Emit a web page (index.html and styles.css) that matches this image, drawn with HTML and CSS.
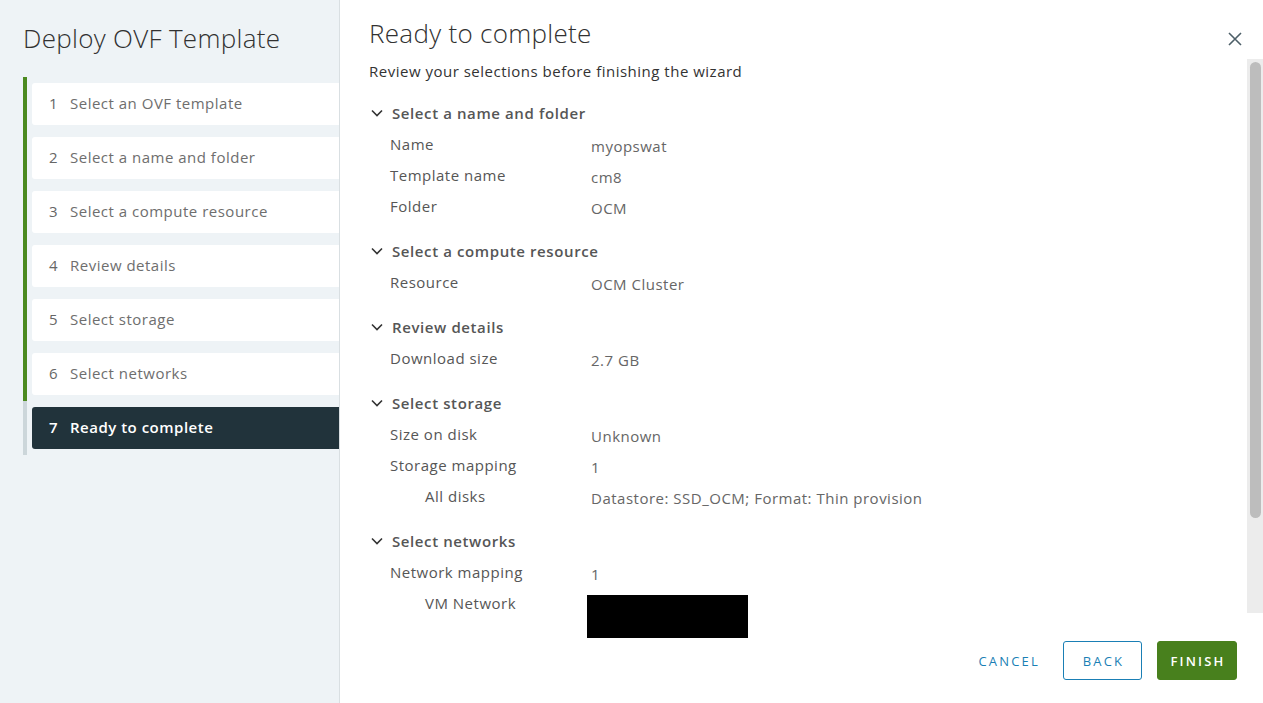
FILE: index.html
```html
<!DOCTYPE html>
<html lang="en">
<head>
<meta charset="utf-8">
<title>Deploy OVF Template</title>
<link rel="stylesheet" href="styles.css">
</head>
<body>
<div class="wizard">
  <aside class="sidebar">
    <h1 class="wizard-title">Deploy OVF Template</h1>
    <ol class="steps">
      <li class="step done"><div class="step-card"><span class="num">1</span><span class="label">Select an OVF template</span></div></li>
      <li class="step done"><div class="step-card"><span class="num">2</span><span class="label">Select a name and folder</span></div></li>
      <li class="step done"><div class="step-card"><span class="num">3</span><span class="label">Select a compute resource</span></div></li>
      <li class="step done"><div class="step-card"><span class="num">4</span><span class="label">Review details</span></div></li>
      <li class="step done"><div class="step-card"><span class="num">5</span><span class="label">Select storage</span></div></li>
      <li class="step done"><div class="step-card"><span class="num">6</span><span class="label">Select networks</span></div></li>
      <li class="step current"><div class="step-card"><span class="num">7</span><span class="label">Ready to complete</span></div></li>
    </ol>
  </aside>
  <main class="main">
    <header class="main-header">
      <h2 class="page-title">Ready to complete</h2>
      <button class="close" aria-label="Close">
        <svg width="14" height="14" viewBox="0 0 14 14"><path d="M1 1 L13 13 M13 1 L1 13" stroke="#4d5f68" stroke-width="1.6" fill="none"/></svg>
      </button>
    </header>
    <div class="scroll">
      <div class="scroll-content">
        <p class="intro">Review your selections before finishing the wizard</p>

        <section class="block">
          <div class="block-head"><svg class="chev" width="12" height="8" viewBox="0 0 12 8"><path d="M1 1.5 L6 6.5 L11 1.5" stroke="#333" stroke-width="1.6" fill="none"/></svg>Select a name and folder</div>
          <div class="row"><span class="k">Name</span><span class="v">myopswat</span></div>
          <div class="row"><span class="k">Template name</span><span class="v">cm8</span></div>
          <div class="row"><span class="k">Folder</span><span class="v">OCM</span></div>
        </section>

        <section class="block">
          <div class="block-head"><svg class="chev" width="12" height="8" viewBox="0 0 12 8"><path d="M1 1.5 L6 6.5 L11 1.5" stroke="#333" stroke-width="1.6" fill="none"/></svg>Select a compute resource</div>
          <div class="row"><span class="k">Resource</span><span class="v">OCM Cluster</span></div>
        </section>

        <section class="block">
          <div class="block-head"><svg class="chev" width="12" height="8" viewBox="0 0 12 8"><path d="M1 1.5 L6 6.5 L11 1.5" stroke="#333" stroke-width="1.6" fill="none"/></svg>Review details</div>
          <div class="row"><span class="k">Download size</span><span class="v">2.7 GB</span></div>
        </section>

        <section class="block">
          <div class="block-head"><svg class="chev" width="12" height="8" viewBox="0 0 12 8"><path d="M1 1.5 L6 6.5 L11 1.5" stroke="#333" stroke-width="1.6" fill="none"/></svg>Select storage</div>
          <div class="row"><span class="k">Size on disk</span><span class="v">Unknown</span></div>
          <div class="row"><span class="k">Storage mapping</span><span class="v">1</span></div>
          <div class="row sub"><span class="k">All disks</span><span class="v">Datastore: SSD_OCM; Format: Thin provision</span></div>
        </section>

        <section class="block">
          <div class="block-head"><svg class="chev" width="12" height="8" viewBox="0 0 12 8"><path d="M1 1.5 L6 6.5 L11 1.5" stroke="#333" stroke-width="1.6" fill="none"/></svg>Select networks</div>
          <div class="row"><span class="k">Network mapping</span><span class="v">1</span></div>
          <div class="row sub"><span class="k">VM Network</span><span class="v"></span></div>
        </section>
      </div>
      <div class="scrollbar"><div class="thumb"></div></div>
    </div>
    <div class="redaction"></div>
    <footer class="footer">
      <button class="btn btn-link">CANCEL</button>
      <button class="btn btn-outline">BACK</button>
      <button class="btn btn-success">FINISH</button>
    </footer>
  </main>
</div>
</body>
</html>
```
FILE: styles.css
```css
* { box-sizing: border-box; }
html, body { margin: 0; padding: 0; }
body {
  font-family: "Open Sans", "Liberation Sans", sans-serif;
  color: #333;
  background: #fff;
}
.wizard {
  display: flex;
  width: 1263px;
  height: 703px;
  overflow: hidden;
}
.sidebar {
  width: 340px;
  flex: none;
  background: #eef3f6;
  border-right: 1px solid #d9dfe2;
  padding-top: 21px;
}
.wizard-title {
  margin: 0 0 0 23px;
  font-size: 26px;
  font-weight: 300;
  letter-spacing: 0.3px;
  line-height: 34px;
  color: #313131;
}
.steps {
  list-style: none;
  margin: 22px 0 0 23px;
  padding: 0;
}
.step {
  border-left: 4px solid #4c8a20;
  padding: 6px 0 6px 5px;
}
.step.current { border-left-color: #ccd6da; }
.step-card {
  height: 42px;
  background: #fff;
  border-radius: 3px 0 0 3px;
  display: flex;
  align-items: center;
  padding: 0 0 2px 17px;
  font-size: 15px;
  letter-spacing: 0.5px;
  color: #6e6e6e;
}
.step-card .num {
  width: 21px;
  color: #666;
}
.step.current .step-card {
  background: #21333b;
  color: #fff;
  font-weight: 600;
}
.step.current .num { color: #fff; }

.main {
  flex: 1;
  position: relative;
  display: flex;
  flex-direction: column;
  min-width: 0;
}
.main-header {
  height: 59px;
  flex: none;
  display: flex;
  justify-content: space-between;
  align-items: flex-start;
  padding: 16px 20px 0 29px;
}
.page-title {
  margin: 0;
  font-size: 26px;
  font-weight: 300;
  letter-spacing: 0.3px;
  line-height: 34px;
  color: #313131;
}
.close {
  background: none;
  border: 0;
  padding: 0;
  margin-top: 16px;
  margin-right: 1px;
  width: 14px;
  height: 14px;
  line-height: 0;
}
.scroll {
  height: 554px;
  flex: none;
  display: flex;
}
.scroll-content {
  flex: 1;
  overflow: hidden;
  padding: 2px 0 0 29px;
}
.scrollbar {
  width: 16px;
  flex: none;
  background: #ececec;
  padding: 3px 2px 0 3px;
}
.thumb {
  height: 456px;
  background: #bdbdbd;
  border-radius: 6px;
}
.intro {
  margin: 0 0 17px;
  font-size: 15px;
  letter-spacing: 0.5px;
  line-height: 20px;
  color: #333;
}
.block + .block { margin-top: 14px; }
.block-head {
  height: 31px;
  display: flex;
  align-items: center;
  font-size: 15px;
  letter-spacing: 0.6px;
  font-weight: 600;
  color: #565656;
  padding: 0 0 1px 2px;
}
.chev { margin-right: 9px; }
.row {
  height: 31px;
  display: flex;
  align-items: center;
  font-size: 15px;
  letter-spacing: 0.5px;
  padding-left: 21px;
}
.row .k {
  width: 201px;
  color: #565656;
  font-weight: 500;
  position: relative;
  top: -1px;
}
.row .v {
  color: #666;
  position: relative;
  top: 1px;
}
.row.sub .k { padding-left: 35px; }
.redaction {
  position: absolute;
  left: 247px;
  top: 595px;
  width: 161px;
  height: 43px;
  background: #000;
}
.footer {
  flex: 1;
  display: flex;
  justify-content: flex-end;
  align-items: flex-start;
  padding: 28px 26px 0 0;
}
.btn {
  font-family: inherit;
  height: 39px;
  font-size: 13px;
  letter-spacing: 2.2px;
  border-radius: 3px;
  cursor: pointer;
  font-weight: 500;
  padding: 0;
}
.btn-link {
  background: none;
  border: 1px solid transparent;
  color: #1a7fb5;
  padding: 0 12px 0 14px;
  margin-right: 10px;
}
.btn-outline {
  background: #fff;
  border: 1px solid #1a7fb5;
  color: #1a7fb5;
  width: 79px;
  margin-right: 15px;
  padding-left: 2px;
}
.btn-success {
  background: #48801d;
  border: 1px solid #48801d;
  color: #fff;
  font-weight: 600;
  width: 80px;
  padding-left: 2px;
}
```
